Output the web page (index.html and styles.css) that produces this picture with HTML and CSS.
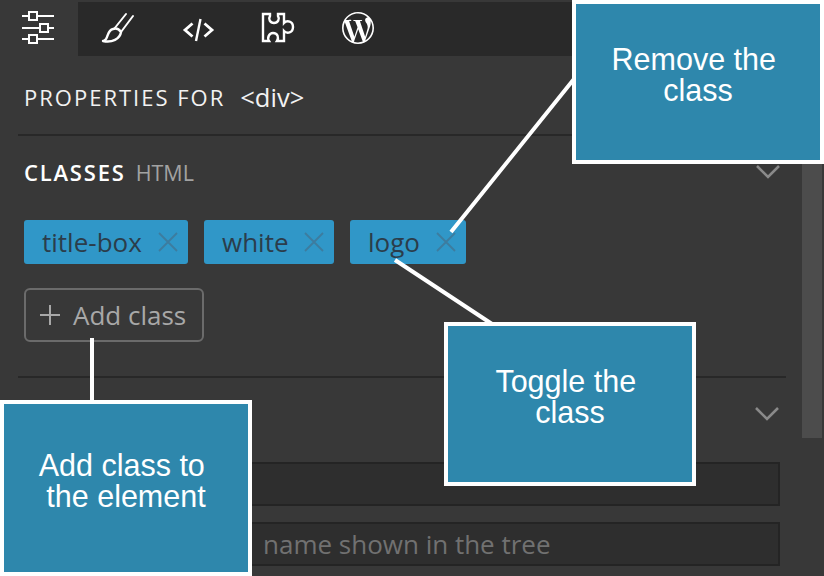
FILE: index.html
```html
<!DOCTYPE html>
<html lang="en">
<head>
  <meta charset="UTF-8">
  <title>Classes panel</title>
  <link rel="stylesheet" href="styles.css">
</head>
<body>
  <div class="panel">
    <div class="tabs">
      <div class="tab active">
        <svg class="icon" viewBox="0 0 32 32"><path d="M0 3h32M0 15h32M0 26h32" stroke="#fff" stroke-width="2" fill="none"/><path d="M7 -1h8v8h-8zM18 11h8v8h-8zM7 22h8v8h-8z" fill="#383838" stroke="#fff" stroke-width="2"/></svg>
      </div>
      <div class="tab">
        <svg class="icon" viewBox="0 0 32 32"><path d="M24 1L12 16M31 3L19 19" stroke="#fff" stroke-width="2" fill="none" stroke-linecap="round"/><path d="M11 16C6 17 6 23 4 26C3 27 2 28 1 28C10 30 18 26 19 19C17 16 14 15 11 16Z" stroke="#fff" stroke-width="2.4" fill="none" stroke-linejoin="round"/></svg>
      </div>
      <div class="tab">
        <svg class="icon" viewBox="0 0 32 32"><path d="M10.5 10.5L3 17L10.5 23.5M22.5 10.5L30 17L22.5 23.5" stroke="#fff" stroke-width="2.8" fill="none"/><path d="M18.5 6L14 28" stroke="#fff" stroke-width="2.4" fill="none"/></svg>
      </div>
      <div class="tab">
        <svg class="icon" viewBox="0 0 32 32"><path d="M1 1H8V3C6 6 8 10 12 10C16 10 18 6 16 3V1H22V10C25 7 31 8 31 14C31 20 25 21 22 18V28H15C17 25 16 20 11 20C7 20 5 25 7 28H1Z" stroke="#fff" stroke-width="2.4" fill="none"/></svg>
      </div>
      <div class="tab">
        <svg class="icon wp" viewBox="0 0 24 24"><path fill="#fff" d="M21.469 6.825c.84 1.537 1.318 3.3 1.318 5.175 0 3.979-2.156 7.456-5.363 9.325l3.295-9.527c.615-1.54.82-2.771.82-3.864 0-.405-.026-.78-.07-1.11m-7.981.105c.647-.03 1.232-.105 1.232-.105.582-.075.514-.93-.067-.899 0 0-1.755.135-2.88.135-1.064 0-2.85-.15-2.85-.15-.585-.03-.661.855-.075.885 0 0 .54.061 1.125.09l1.68 4.605-2.37 7.08L5.354 6.9c.649-.03 1.234-.1 1.234-.1.585-.075.516-.93-.065-.896 0 0-1.746.138-2.874.138-.2 0-.438-.008-.69-.015C4.911 3.15 8.235 1.215 12 1.215c2.809 0 5.365 1.072 7.286 2.833-.046-.003-.091-.009-.141-.009-1.06 0-1.812.923-1.812 1.914 0 .89.513 1.643 1.06 2.531.411.72.89 1.643.89 2.977 0 .915-.354 1.994-.821 3.479l-1.075 3.585-3.9-11.61.001.014zM12 22.784c-1.059 0-2.081-.153-3.048-.437l3.237-9.406 3.315 9.087c.024.053.05.101.078.149-1.12.393-2.325.609-3.582.609M1.211 12c0-1.564.336-3.05.935-4.39L7.29 21.709C3.694 19.96 1.212 16.271 1.211 12M12 0C5.385 0 0 5.385 0 12s5.385 12 12 12 12-5.385 12-12S18.615 0 12 0"/></svg>
      </div>
    </div>

    <div class="scrollbar"></div>

    <div class="section props-head">
      <span class="caps">PROPERTIES FOR</span>
      <span class="tag-name">&lt;div&gt;</span>
    </div>

    <div class="section classes">
      <div class="section-title">
        <span class="caps strong">CLASSES</span>
        <span class="sub">HTML</span>
        <svg class="chevron" viewBox="0 0 24 14"><path d="M1 1L12 12L23 1" stroke="#8a8a8a" stroke-width="2.6" fill="none"/></svg>
      </div>
      <div class="chips">
        <span class="chip chip-1">title-box<svg class="x" viewBox="0 0 20 20"><path d="M1 1L19 19M19 1L1 19" stroke="#3d7c9f" stroke-width="1.8"/></svg></span>
        <span class="chip chip-2">white<svg class="x" viewBox="0 0 20 20"><path d="M1 1L19 19M19 1L1 19" stroke="#3d7c9f" stroke-width="1.8"/></svg></span>
        <span class="chip chip-3">logo<svg class="x" viewBox="0 0 20 20"><path d="M1 1L19 19M19 1L1 19" stroke="#3d7c9f" stroke-width="1.8"/></svg></span>
      </div>
      <div class="add-btn"><svg class="plus" viewBox="0 0 20 20"><path d="M10 0V20M0 10H20" stroke="#a8a8a8" stroke-width="2"/></svg>Add class</div>
    </div>

    <div class="section general">
      <svg class="chevron" viewBox="0 0 24 14"><path d="M1 1L12 12L23 1" stroke="#8a8a8a" stroke-width="2.6" fill="none"/></svg>
      <input class="field" type="text">
      <input class="field" type="text" placeholder="name shown in the tree">
    </div>
  </div>

  <svg class="leaders" viewBox="0 0 824 576">
    <path d="M451 232L578 74M395 260L492 324M92 338V404" stroke="#fff" stroke-width="4" fill="none"/>
  </svg>

  <div class="callout callout-remove">Remove the&nbsp;<br>class</div>
  <div class="callout callout-toggle">Toggle the&nbsp;<br>class</div>
  <div class="callout callout-add">Add class to&nbsp;<br>the element</div>
</body>
</html>
```

FILE: styles.css
```css
html, body {
  margin: 0;
  height: 100%;
  overflow: hidden;
}
body {
  position: relative;
  width: 824px;
  height: 576px;
  background-color: #383838;
  font-family: "Open Sans", sans-serif;
}
.panel {
  height: 576px;
  padding-top: 2px;
  box-sizing: border-box;
  position: relative;
}
.tabs {
  display: flex;
  height: 54px;
  background-color: #292929;
}
.tab {
  display: flex;
  align-items: center;
  width: 80px;
  padding-left: 24px;
  box-sizing: border-box;
}
.tab.active {
  width: 78px;
  padding-left: 22px;
  background-color: #383838;
}
.icon {
  width: 32px;
  height: 32px;
  overflow: visible;
}
.icon.wp {
  margin-top: -2px;
}
.scrollbar {
  position: absolute;
  top: 56px;
  right: 2px;
  width: 20px;
  height: 382px;
  background-color: #4c4c4c;
}
.section {
  margin: 0 38px 0 18px;
  padding: 0 6px;
  border-bottom: 2px solid #282828;
}
.props-head {
  display: flex;
  align-items: center;
  gap: 15px;
  height: 80px;
  padding-top: 3px;
  box-sizing: border-box;
  color: #f2f2f2;
}
.caps {
  font-size: 22px;
  font-weight: 500;
  letter-spacing: 2px;
}
.caps.strong {
  font-weight: 600;
  letter-spacing: 1.8px;
  color: #fff;
}
.tag-name {
  font-size: 25.5px;
}
.classes {
  height: 242px;
  box-sizing: border-box;
  padding-top: 21px;
}
.section-title {
  display: flex;
  align-items: center;
  gap: 10px;
  height: 30px;
}
.sub {
  font-size: 21.5px;
  color: #a2a2a2;
}
.chevron {
  width: 24px;
  height: 14px;
}
.section-title .chevron {
  margin-left: auto;
}
.chips {
  display: flex;
  gap: 16px;
  margin-top: 33px;
}
.chip {
  display: flex;
  align-items: center;
  justify-content: space-between;
  height: 44px;
  padding: 0 10px 0 18px;
  box-sizing: border-box;
  border-radius: 3px;
  background-color: #3097c8;
  color: #2b3d4b;
  font-size: 26px;
}
.chip-1 { width: 164px; }
.chip-2 { width: 130px; }
.chip-3 { width: 116px; }
.x {
  width: 20px;
  height: 20px;
}
.add-btn {
  display: flex;
  align-items: center;
  gap: 13px;
  width: 180px;
  height: 54px;
  margin-top: 24px;
  padding-left: 14px;
  box-sizing: border-box;
  border: 2px solid #6b6b6b;
  border-radius: 6px;
  color: #a8a8a8;
  font-size: 26px;
}
.plus {
  width: 20px;
  height: 20px;
}
.general {
  display: flex;
  flex-direction: column;
  align-items: flex-end;
  border-bottom: 0;
  padding-top: 29px;
}
.general .chevron {
  margin-bottom: 41px;
  margin-right: 1px;
}
.field {
  width: 540px;
  height: 44px;
  margin: 0 0 16px;
  padding: 0 0 0 21px;
  box-sizing: border-box;
  border: 2px solid #242424;
  background-color: #2e2e2e;
  color: #ccc;
  font-family: "Open Sans", sans-serif;
  font-size: 26px;
}
.field::placeholder {
  color: #717171;
  opacity: 1;
}
.leaders {
  position: absolute;
  top: 0;
  left: 0;
  width: 824px;
  height: 576px;
}
.callout {
  position: absolute;
  display: flex;
  align-items: center;
  justify-content: center;
  width: 252px;
  height: 164px;
  padding-bottom: 14px;
  box-sizing: border-box;
  border: 4px solid #fff;
  background-color: #2e87ac;
  color: #fff;
  font-family: "Liberation Sans", Arial, sans-serif;
  font-size: 30.5px;
  line-height: 31px;
  text-align: center;
}
.callout-remove { left: 572px; top: 0; }
.callout-toggle { left: 444px; top: 322px; }
.callout-add { left: 0; top: 400px; height: 176px; }
```
